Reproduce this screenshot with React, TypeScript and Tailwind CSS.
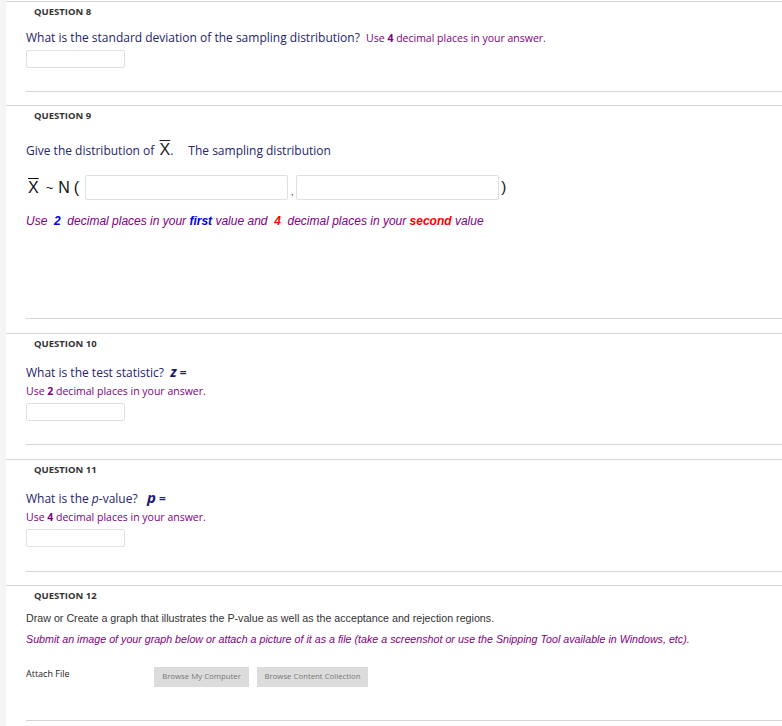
import React from "react";

const open = { fontFamily: '"Open Sans", "Liberation Sans", sans-serif' };
const arial = { fontFamily: '"Liberation Sans", Arial, sans-serif' };

function Header({ n }: { n: number }) {
  return (
    <div className="h-[20px] pl-[28px] text-[9.5px] font-bold leading-[20px] text-[#333]" style={open}>
      QUESTION {n}
    </div>
  );
}

function Box({ className = "" }: { className?: string }) {
  return <div className={`rounded-[2px] border border-[#e0e0e0] bg-white ${className}`} />;
}

export default function App() {
  return (
    <div className="flex min-h-[726px] w-[782px] bg-white text-[#333]" style={open}>
      <div className="w-[6px] shrink-0 bg-[#f5f5f5]" />
      <div className="flex-1 pt-[1px]">
        {/* question 8 */}
        <section className="border-t border-[#d6d6d6]">
          <Header n={8} />
          <div className="ml-[20px] border-b border-[#d6d6d6] pb-[23px]">
            <p className="mt-[7px] text-[12px] leading-[18px] text-[#25256b]">
              What is the standard deviation of the sampling distribution?&nbsp;{" "}
              <span className="text-[10.5px] text-[#800080]">
                Use <b>4</b> decimal places in your answer.
              </span>
            </p>
            <Box className="mt-[3px] h-[18px] w-[99px]" />
          </div>
          <div className="h-[13px]" />
        </section>

        {/* question 9 */}
        <section className="border-t border-[#d6d6d6]">
          <Header n={9} />
          <div className="ml-[20px] border-b border-[#d6d6d6] pb-[88px]">
            <p className="mt-[15px] flex items-baseline text-[12px] leading-[18px] text-[#25256b]">
              Give the distribution of&nbsp;
              <span className="ml-[2px] text-[16px] text-[#222] overline decoration-1" style={arial}>X</span>
              <span>.</span>
              <span className="ml-[15px]">The sampling distribution</span>
            </p>
            <div className="mt-[15px] flex h-[25px] items-center text-[#111]" style={arial}>
              <span className="ml-[2px] text-[16px] leading-none">
                <span className="overline decoration-1">X</span>
              </span>
              <span className="ml-[7px] text-[13px]">~</span>
              <span className="ml-[5px] text-[16px]">N</span>
              <span className="ml-[4px] text-[16px]">(</span>
              <Box className="ml-[6px] h-[25px] w-[203px]" />
              <span className="mt-[10px] w-[8px] text-center text-[9px]">,</span>
              <Box className="h-[25px] w-[203px]" />
              <span className="ml-[2px] text-[15px]">)</span>
            </div>
            <p className="mt-[12px] text-[12px] italic leading-[18px] text-[#800080]" style={arial}>
              Use&nbsp; <b className="text-[#0000ee]">2</b>&nbsp; decimal places in your{" "}
              <b className="text-[#0000ee]">first</b> value and&nbsp; <b className="text-[#ff0000]">4</b>&nbsp; decimal
              places in your <b className="text-[#ff0000]">second</b> value
            </p>
          </div>
          <div className="h-[14px]" />
        </section>

        {/* question 10 */}
        <section className="border-t border-[#d6d6d6]">
          <Header n={10} />
          <div className="ml-[20px] border-b border-[#d6d6d6] pb-[23px]">
            <p className="mt-[10px] h-[18px] text-[12px] leading-[18px] text-[#25256b]">
              What is the test statistic?&nbsp;&nbsp;
              <b className="text-[14px] italic leading-none text-[#1a1a70]">z</b> <b>=</b>
            </p>
            <p className="text-[10.5px] leading-[18px] text-[#800080]">
              Use <b>2</b> decimal places in your answer.
            </p>
            <Box className="mt-[3px] h-[18px] w-[99px]" />
          </div>
          <div className="h-[14px]" />
        </section>

        {/* question 11 */}
        <section className="border-t border-[#d6d6d6]">
          <Header n={11} />
          <div className="ml-[20px] border-b border-[#d6d6d6] pb-[24px]">
            <p className="mt-[10px] h-[18px] text-[12px] leading-[18px] text-[#25256b]">
              What is the <i>p</i>-value?&nbsp;&nbsp;{" "}
              <b className="text-[15px] italic leading-none text-[#1a1a70]">p</b> <b>=</b>
            </p>
            <p className="text-[10.5px] leading-[18px] text-[#800080]">
              Use <b>4</b> decimal places in your answer.
            </p>
            <Box className="mt-[3px] h-[18px] w-[99px]" />
          </div>
          <div className="h-[13px]" />
        </section>

        {/* question 12 */}
        <section className="border-t border-[#d6d6d6]">
          <Header n={12} />
          <div className="ml-[20px] border-b border-[#d6d6d6] pb-[33px]">
            <p className="mt-[3px] text-[10.7px] leading-[18px] text-[#333]" style={arial}>
              Draw or Create a graph that illustrates the P-value as well as the acceptance and rejection regions.
            </p>
            <p className="mt-[3px] text-[10.7px] italic leading-[18px] text-[#800080]" style={arial}>
              Submit an image of your graph below or attach a picture of it as a file (take a screenshot or use the
              Snipping Tool available in Windows, etc).
            </p>
            <div className="mt-[19px] flex items-start">
              <span className="w-[128px] text-[9px] leading-[13px] text-[#222]">Attach File</span>
              <button className="h-[20px] w-[95px] bg-[#dcdcdc] text-[7.8px] text-[#777]">Browse My Computer</button>
              <button className="ml-[8px] h-[20px] w-[111px] bg-[#dcdcdc] text-[7.8px] text-[#777]">
                Browse Content Collection
              </button>
            </div>
          </div>
        </section>
      </div>
    </div>
  );
}
